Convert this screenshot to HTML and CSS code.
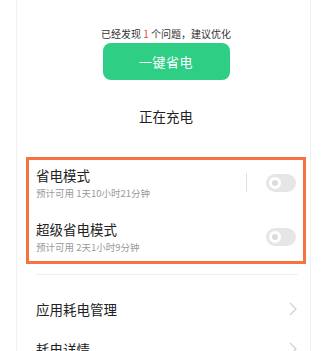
FILE: index.html
```html
<!DOCTYPE html>
<html lang="zh">
<head>
<meta charset="utf-8">
<link rel="stylesheet" href="styles.css">
</head>
<body>
<div class="card">
  <div class="top">
    <p class="hint">已经发现 <span class="red">1</span> 个问题，建议优化</p>
    <div class="btn">一键省电</div>
    <p class="status">正在充电</p>
  </div>
  <div class="modes">
    <div class="row">
      <div class="txt">
        <div class="title">省电模式</div>
        <div class="sub">预计可用 1天10小时21分钟</div>
      </div>
      <span class="vsep"></span>
      <span class="toggle"><span class="knob"></span></span>
    </div>
    <div class="row row2">
      <div class="txt">
        <div class="title">超级省电模式</div>
        <div class="sub">预计可用 2天1小时9分钟</div>
      </div>
      <span class="toggle"><span class="knob"></span></span>
    </div>
  </div>
  <div class="hr"></div>
  <div class="link">
    <span>应用耗电管理</span>
    <svg class="chev" width="8" height="14" viewBox="0 0 8 14"><path d="M1 1 L7 7 L1 13" fill="none" stroke="#cfcfcf" stroke-width="1.2"/></svg>
  </div>
  <div class="link">
    <span>耗电详情</span>
    <svg class="chev" width="8" height="14" viewBox="0 0 8 14"><path d="M1 1 L7 7 L1 13" fill="none" stroke="#cfcfcf" stroke-width="1.2"/></svg>
  </div>
</div>
</body>
</html>
```
FILE: styles.css
```css
* { box-sizing: border-box; }
html, body { margin: 0; padding: 0; background: #fff; overflow: hidden; }
body {
  font-family: "Noto Sans CJK SC", "Noto Sans", sans-serif;
  width: 326px;
  height: 351px;
}
.card {
  margin-left: 16px;
  width: 295px;
  min-height: 400px;
  border-left: 1px solid #f2f2f2;
  border-right: 1px solid #f0f0f0;
}
.top {
  display: flex;
  flex-direction: column;
  align-items: center;
  padding-left: 5px;
  padding-top: 27px;
}
.hint {
  margin: 0;
  font-size: 10px;
  line-height: 14px;
  color: #333;
}
.red { color: #e0483a; }
.btn {
  margin-top: 2px;
  width: 127px;
  height: 37px;
  border-radius: 8px;
  background: #2ecf85;
  color: #fff;
  font-size: 13px;
  display: flex;
  align-items: center;
  justify-content: center;
  letter-spacing: 0.5px;
}
.status {
  margin: 26px 0 0;
  font-size: 13.5px;
  line-height: 20px;
  color: #222;
}
.modes {
  margin: 31px 4px 0 9px;
  border: 3px solid #f4733f;
  padding: 6px 7px 7px 7px;
}
.row {
  display: flex;
  align-items: center;
}
.row2 { margin-top: 20px; }
.txt { flex: 1; }
.title {
  font-size: 13.5px;
  line-height: 18px;
  color: #222;
}
.sub {
  margin-top: 2px;
  font-size: 9.5px;
  line-height: 14px;
  color: #999;
}
.vsep {
  width: 1px;
  height: 19px;
  background: #e0e0e0;
  margin-right: 19px;
  margin-top: -1px;
}
.toggle {
  width: 30px;
  height: 18px;
  border-radius: 9px;
  background: #e6e6e6;
  display: flex;
  align-items: center;
  padding-left: 3px;
}
.knob {
  width: 12px;
  height: 12px;
  border-radius: 50%;
  border: 3px solid #fff;
  background: #dcdcdc;
}
.hr {
  margin: 10px 12px 0 19px;
  height: 1px;
  background: #eeeeee;
}
.link {
  margin-top: 14px;
  height: 40px;
  padding: 0 13px 0 19px;
  display: flex;
  align-items: center;
  justify-content: space-between;
  font-size: 13.5px;
  color: #222;
}
.link + .link { margin-top: 0; }
.chev { display: block; }
```
